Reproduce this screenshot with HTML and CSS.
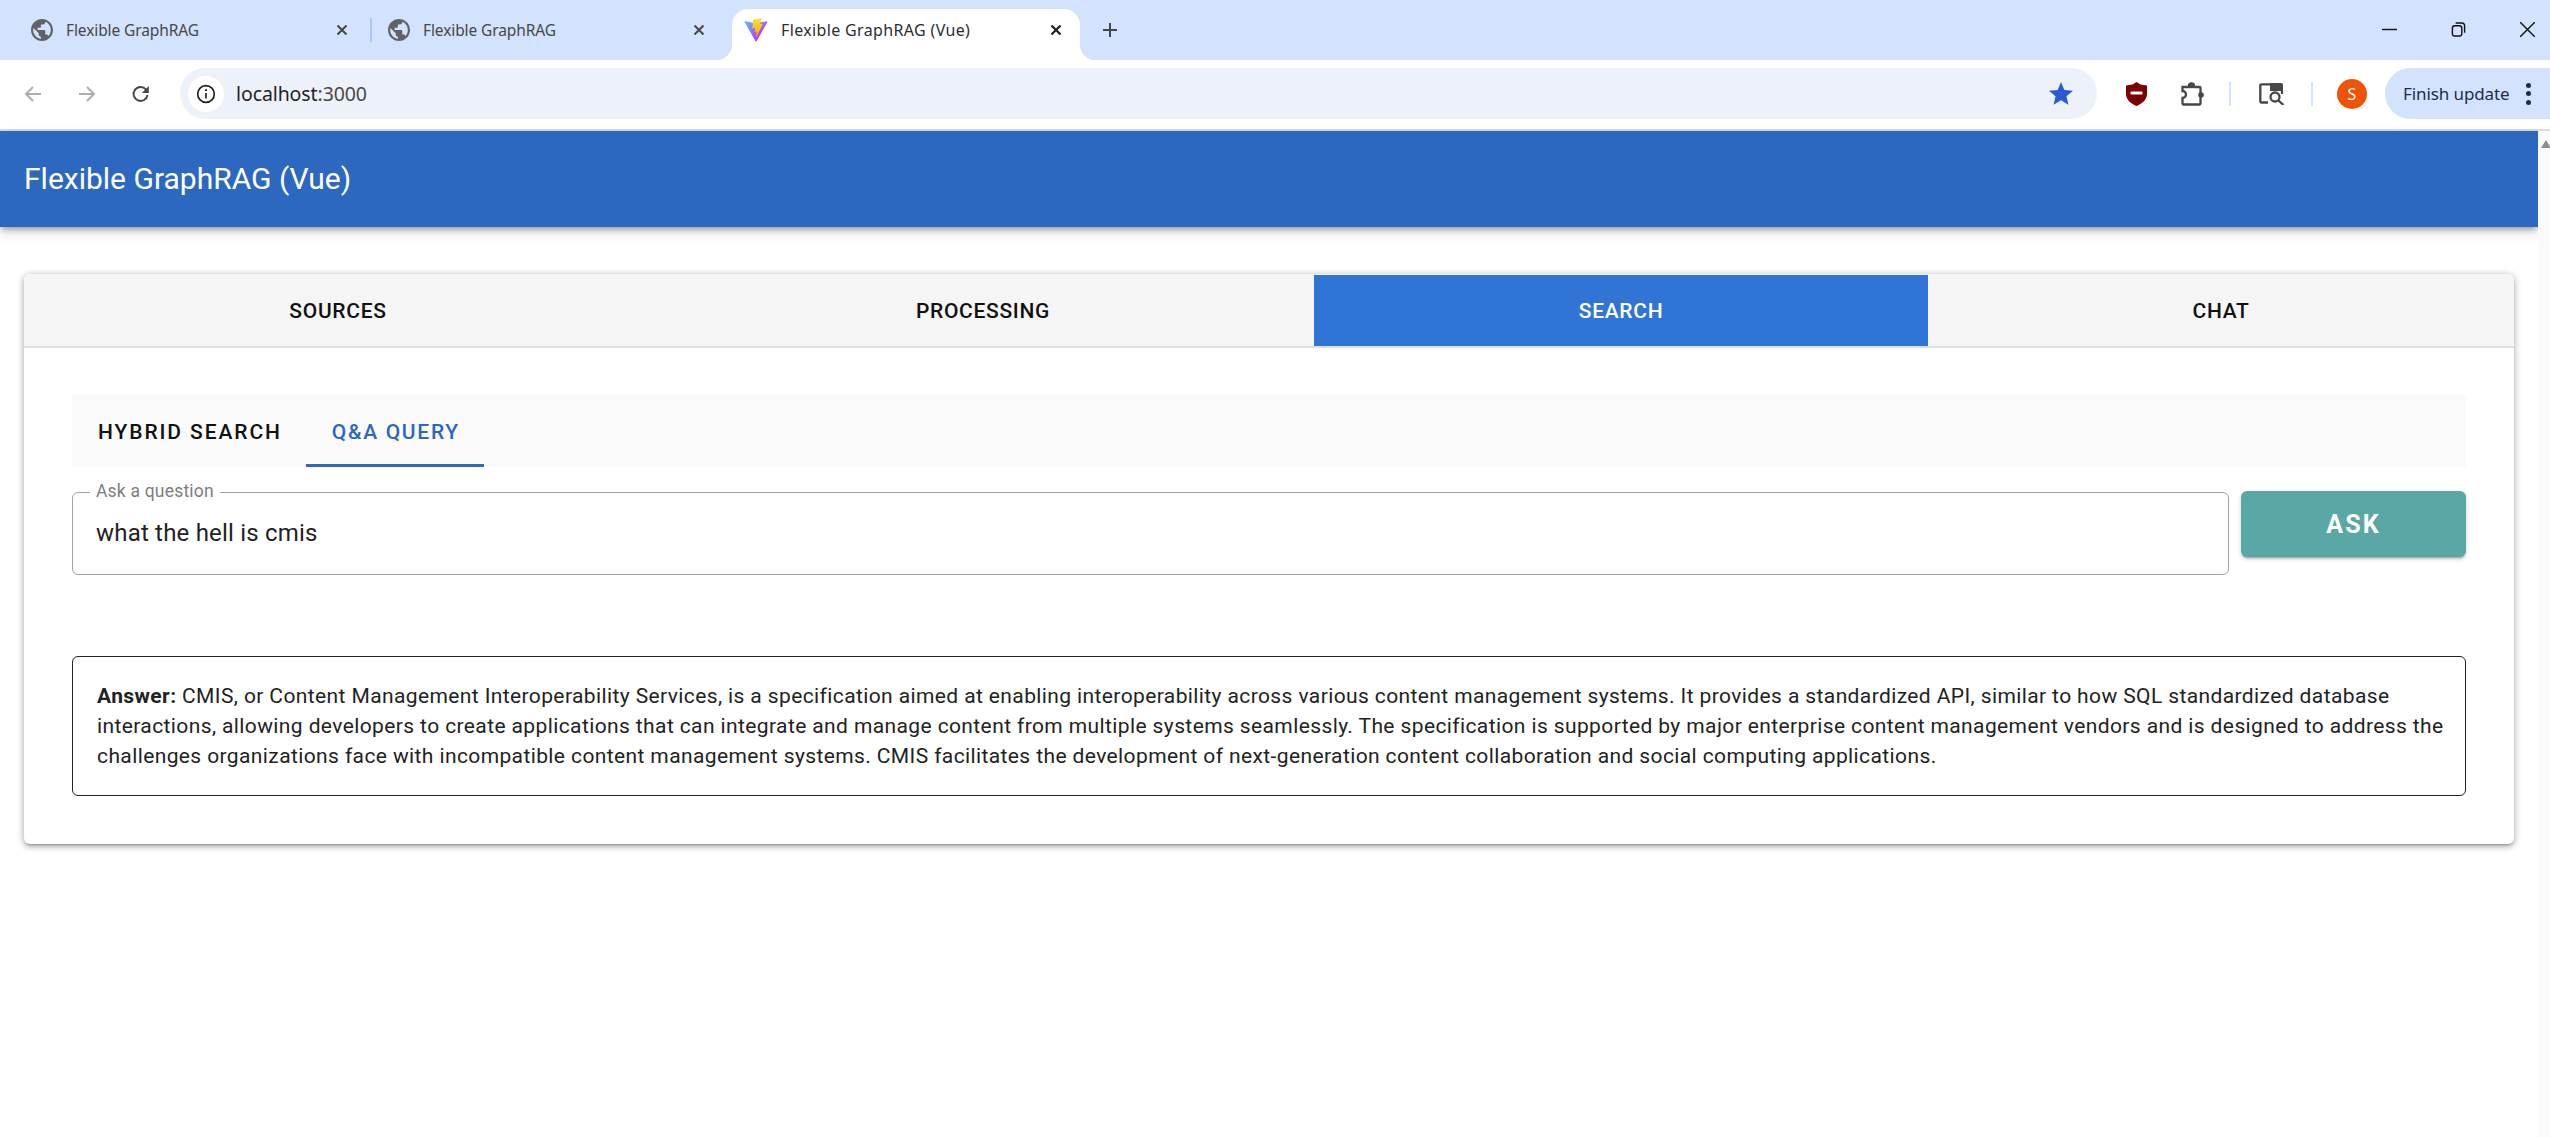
FILE: index.html
```html
<!DOCTYPE html>
<html lang="en">
<head>
<meta charset="UTF-8">
<meta name="viewport" content="width=device-width, initial-scale=1.0">
<title>Flexible GraphRAG (Vue)</title>
<link rel="stylesheet" href="styles.css">
</head>
<body>

<div class="tab-strip">
  <div class="browser-tab">
    <svg class="tab-icon" viewBox="2 2 20 20"><path fill="#5f6368" d="M12 2C6.48 2 2 6.48 2 12s4.48 10 10 10 10-4.48 10-10S17.52 2 12 2zm-1 17.93c-3.95-.49-7-3.85-7-7.93 0-.62.08-1.21.21-1.79L9 15v1c0 1.1.9 2 2 2v1.93zm6.9-2.54c-.26-.81-1-1.39-1.9-1.39h-1v-3c0-.55-.45-1-1-1H8v-2h2c.55 0 1-.45 1-1V7h2c1.1 0 2-.9 2-2v-.41c2.93 1.19 5 4.06 5 7.41 0 2.08-.8 3.97-2.1 5.39z"/></svg>
    <span class="tab-title">Flexible GraphRAG</span>
    <svg class="tab-close" viewBox="0 0 12 12"><path d="M1.5 1.5l9 9M10.5 1.5l-9 9"/></svg>
  </div>
  <div class="tab-sep"></div>
  <div class="browser-tab">
    <svg class="tab-icon" viewBox="2 2 20 20"><path fill="#5f6368" d="M12 2C6.48 2 2 6.48 2 12s4.48 10 10 10 10-4.48 10-10S17.52 2 12 2zm-1 17.93c-3.95-.49-7-3.85-7-7.93 0-.62.08-1.21.21-1.79L9 15v1c0 1.1.9 2 2 2v1.93zm6.9-2.54c-.26-.81-1-1.39-1.9-1.39h-1v-3c0-.55-.45-1-1-1H8v-2h2c.55 0 1-.45 1-1V7h2c1.1 0 2-.9 2-2v-.41c2.93 1.19 5 4.06 5 7.41 0 2.08-.8 3.97-2.1 5.39z"/></svg>
    <span class="tab-title">Flexible GraphRAG</span>
    <svg class="tab-close" viewBox="0 0 12 12"><path d="M1.5 1.5l9 9M10.5 1.5l-9 9"/></svg>
  </div>
  <div class="browser-tab active">
    <svg class="vite-icon" viewBox="2 1 28 29.5">
      <defs>
        <linearGradient id="viteA" x1="6" y1="33" x2="235" y2="344" gradientUnits="userSpaceOnUse" gradientTransform="scale(.0781)"><stop offset="0" stop-color="#41d1ff"/><stop offset="1" stop-color="#bd34fe"/></linearGradient>
        <linearGradient id="viteB" x1="194" y1="8" x2="236" y2="293" gradientUnits="userSpaceOnUse" gradientTransform="scale(.0781)"><stop offset="0" stop-color="#ffea83"/><stop offset=".08" stop-color="#ffdd35"/><stop offset="1" stop-color="#ffa800"/></linearGradient>
      </defs>
      <path fill="url(#viteA)" d="M29.8836 6.146L16.7418 29.6457c-.2714.4851-.9684.488-1.2439.0052L2.0956 6.1482c-.3001-.5262.1499-1.1634.7462-1.057l13.1563 2.3516a.7144.7144 0 00.2537-.0004l12.8811-2.3478c.5944-.1083 1.0463.5241.7507 1.0513z"/>
      <path fill="url(#viteB)" d="M22.2644 1.2399l-9.7255 1.9056a.3572.3572 0 00-.2879.3294l-.5982 10.1045c-.0141.238.2045.4227.4367.3691l2.7077-.6248c.2534-.0585.4823.1647.4302.4194l-.8044 3.9393c-.0542.265.1947.4918.4536.4132l1.6725-.5082c.2593-.0787.5084.1487.4536.414l-1.2785 6.1881c-.08.3871.4349.5982.6498.2665l.1435-.2216 7.9251-15.8156c.1327-.2648-.0961-.5666-.3869-.5105l-2.7872.538c-.2619.0505-.4847-.1934-.4109-.4494l1.8191-6.3064c.074-.2565-.1496-.5009-.4119-.4495z"/>
    </svg>
    <span class="tab-title">Flexible GraphRAG (Vue)</span>
    <svg class="tab-close" viewBox="0 0 12 12"><path d="M1.5 1.5l9 9M10.5 1.5l-9 9"/></svg>
  </div>
  <svg class="new-tab" viewBox="0 0 16 16"><path d="M8 1v14M1 8h14"/></svg>
  <div class="window-controls">
    <svg class="win-icon" viewBox="0 0 16 16"><path d="M0 8h16"/></svg>
    <svg class="win-icon" viewBox="0 0 16 16"><rect x="1.500" y="4" width="10" height="11" rx="2.500"/><path d="M5 1h6.500a3 3 0 013 3v7.500"/></svg>
    <svg class="win-icon" viewBox="0 0 16 16"><path d="M0 0l16 16M16 0L0 16"/></svg>
  </div>
</div>

<div class="toolbar">
  <div class="nav-buttons">
    <svg class="nav-icon off" viewBox="0 0 20 20"><path d="M18 10H3M10 3l-7 7 7 7"/></svg>
    <svg class="nav-icon off" viewBox="0 0 20 20"><path d="M2 10h15M10 3l7 7-7 7"/></svg>
    <svg class="nav-icon" viewBox="0 0 20 20"><path d="M16.500 11a7 7 0 11-1.600-5.600L17 7.500"/><path class="fill" d="M17.800 2v7h-7z"/></svg>
  </div>
  <div class="omnibox">
    <div class="site-info">
      <svg viewBox="0 0 20 20"><circle cx="10" cy="10" r="8.300"/><path d="M10 9v5.500"/><path class="dot" d="M10 5.200v1.900"/></svg>
    </div>
    <span class="url">localhost<span class="url-port">:3000</span></span>
    <svg class="star" viewBox="2 2 20 20"><path d="M12 17.270L18.180 21l-1.640-7.030L22 9.240l-7.190-.610L12 2 9.190 8.630 2 9.240l5.460 4.730L5.820 21z"/></svg>
  </div>
  <div class="actions">
    <svg class="shield" viewBox="0 0 21 24"><path fill="#7c0202" d="M10.500 0l4 2.500 6.500 1V12c0 5.500-4.500 9.500-10.500 12C4.500 21.500 0 17.500 0 12V3.500l6.500-1z"/><rect x="4.500" y="9.500" width="12" height="3" rx="1" fill="#fff"/></svg>
    <svg class="puzzle" viewBox="0 0 24 24">
      <path d="M2.500 5h6.500V4a2.500 2.500 0 015 0v1h5.500a1 1 0 011 1v15.500a1 1 0 01-1 1H3.500a1 1 0 01-1-1V16a3.500 3.500 0 000-7z"/>
      <circle class="knob" cx="21" cy="13" r="2.800"/>
      <circle class="knob" cx="11.500" cy="3.500" r="2.800"/>
    </svg>
    <div class="action-sep"></div>
    <svg class="tab-search" viewBox="0 0 26 22">
      <path class="outline" d="M9 19.500H2.500a1.200 1.200 0 01-1.200-1.200V2.500a1.200 1.200 0 011.200-1.200h9"/>
      <path class="solid" d="M11 0h11a2 2 0 012 2v6H11z"/>
      <circle class="outline" cx="16" cy="14" r="4.500"/>
      <path class="outline" d="M19.500 17.500l5 4.500"/>
      <path class="outline" d="M23 8v3"/>
    </svg>
    <div class="action-sep"></div>
    <div class="avatar">S</div>
  </div>
  <div class="update-pill">
    <span>Finish update</span>
    <div class="menu-dots"><i></i><i></i><i></i></div>
  </div>
</div>

<div class="page">
  <div class="app">
    <header class="app-bar">Flexible GraphRAG (Vue)</header>
    <main class="content">
      <section class="card">
        <nav class="main-tabs">
          <div class="main-tab">SOURCES</div>
          <div class="main-tab">PROCESSING</div>
          <div class="main-tab selected">SEARCH</div>
          <div class="main-tab">CHAT</div>
        </nav>
        <div class="card-body">
          <div class="sub-tabs">
            <div class="sub-tab">HYBRID SEARCH</div>
            <div class="sub-tab selected">Q&amp;A QUERY</div>
          </div>
          <div class="ask-row">
            <fieldset class="ask-field">
              <legend>Ask a question</legend>
              <div class="ask-value">what the hell is cmis</div>
            </fieldset>
            <button class="ask-button">ASK</button>
          </div>
          <div class="answer">
            <strong>Answer:</strong> CMIS, or Content Management Interoperability Services, is a specification aimed at enabling interoperability across various content management systems. It provides a standardized API, similar to how SQL standardized database interactions, allowing developers to create applications that can integrate and manage content from multiple systems seamlessly. The specification is supported by major enterprise content management vendors and is designed to address the challenges organizations face with incompatible content management systems. CMIS facilitates the development of next-generation content collaboration and social computing applications.
          </div>
        </div>
      </section>
    </main>
  </div>
  <div class="scrollbar"><div class="scroll-up"></div></div>
</div>

</body>
</html>
```

FILE: styles.css
```css
* {
  box-sizing: border-box;
}

html, body {
  margin: 0;
  height: 100%;
  overflow: hidden;
}

body {
  font-family: Roboto, "Liberation Sans", sans-serif;
  background-color: white;
  display: flex;
  flex-direction: column;
}

/* Browser chrome */
.tab-strip {
  height: 60px;
  flex: none;
  background-color: #d3e3fd;
  display: flex;
  align-items: flex-end;
  padding-left: 18px;
}

.browser-tab {
  position: relative;
  width: 348px;
  height: 51px;
  flex: none;
  display: flex;
  align-items: center;
  padding: 0 18px 9px 13px;
  border-radius: 16px 16px 0 0;
}

.browser-tab.active {
  background-color: white;
  margin-left: 9px;
}

.browser-tab.active::before,
.browser-tab.active::after {
  content: "";
  position: absolute;
  bottom: 0;
  width: 16px;
  height: 16px;
}

.browser-tab.active::before {
  left: -16px;
  background: radial-gradient(circle at 0 0, transparent 16px, white 16.5px);
}

.browser-tab.active::after {
  right: -16px;
  background: radial-gradient(circle at 100% 0, transparent 16px, white 16.5px);
}

.tab-icon {
  width: 22px;
  height: 22px;
  flex: none;
}

.vite-icon {
  width: 24px;
  height: 24px;
  margin-left: -1px;
  flex: none;
}

.tab-title {
  font-family: "Noto Sans", sans-serif;
  font-size: 15.5px;
  color: #45474a;
  margin-left: 13px;
  letter-spacing: -0.1px;
  flex: 1;
  white-space: nowrap;
}

.active .tab-title {
  color: #2b2d30;
  font-size: 16px;
  letter-spacing: 0.35px;
}

.tab-close {
  width: 12px;
  height: 12px;
  flex: none;
  fill: none;
  stroke: #45474a;
  stroke-width: 2;
}

.active .tab-close {
  stroke: #1f1f1f;
  stroke-width: 2.2;
}

.tab-sep {
  width: 2px;
  height: 24px;
  margin: 0 3.5px 18px;
  background-color: #a8c7fa;
  flex: none;
}

.new-tab {
  width: 16px;
  height: 16px;
  margin: 0 0 22px 22px;
  fill: none;
  stroke: #444746;
  stroke-width: 2;
  flex: none;
}

.window-controls {
  margin-left: auto;
  display: flex;
  gap: 54px;
  padding: 0 15.5px 23.5px 0;
}

.win-icon {
  width: 15px;
  height: 15px;
  fill: none;
  stroke: #111;
  stroke-width: 1.5;
}

.toolbar {
  height: 71px;
  flex: none;
  background-color: white;
  border-bottom: 2px solid #dcdcdc;
  display: flex;
  align-items: center;
  padding-bottom: 2px;
}

.nav-buttons {
  width: 180px;
  flex: none;
  display: flex;
  align-items: center;
  gap: 34px;
  padding-left: 23px;
}

.nav-icon {
  width: 20px;
  height: 20px;
  fill: none;
  stroke: #474747;
  stroke-width: 1.9;
}

.nav-icon.off {
  stroke: #aeaeae;
}

.nav-icon .fill {
  fill: #474747;
  stroke: none;
}

.omnibox {
  width: 1917px;
  height: 51px;
  flex: none;
  background-color: #edf2fa;
  border-radius: 26px;
  display: flex;
  align-items: center;
  padding: 0 24px 0 8px;
}

.site-info {
  width: 36px;
  height: 36px;
  border-radius: 50%;
  background-color: white;
  display: flex;
  align-items: center;
  justify-content: center;
  flex: none;
}

.site-info svg {
  width: 20px;
  height: 20px;
  fill: none;
  stroke: #1f1f1f;
  stroke-width: 1.7;
}

.site-info .dot {
  stroke-width: 2;
}

.url {
  font-family: "Noto Sans", sans-serif;
  font-size: 19.5px;
  color: #1f1f1f;
  margin-left: 12px;
  letter-spacing: -0.1px;
}

.url-port {
  color: #474747;
}

.star {
  width: 24px;
  height: 24px;
  margin-left: auto;
  fill: #285bd4;
}

.actions {
  width: 288px;
  flex: none;
  display: flex;
  align-items: center;
  padding-left: 29px;
}

.shield {
  width: 21px;
  height: 24px;
}

.puzzle {
  width: 24px;
  height: 24px;
  margin-left: 33px;
  fill: none;
  stroke: #474747;
  stroke-width: 2.3;
}

.puzzle .knob {
  fill: #474747;
  stroke: none;
}

.action-sep {
  width: 2px;
  height: 24px;
  background-color: #d3e3fd;
}

.puzzle + .action-sep {
  margin: 0 28px 0 25px;
}

.tab-search {
  width: 26px;
  height: 22px;
}

.tab-search .outline {
  fill: none;
  stroke: #474747;
  stroke-width: 2.3;
}

.tab-search .solid {
  fill: #474747;
}

.tab-search + .action-sep {
  margin: 0 24px 0 26px;
}

.avatar {
  width: 30px;
  height: 30px;
  border-radius: 50%;
  background-color: #ef5305;
  color: white;
  font-family: "Noto Sans", sans-serif;
  font-size: 16px;
  display: flex;
  align-items: center;
  justify-content: center;
}

.update-pill {
  flex: 1;
  height: 51px;
  background-color: #d3e3fd;
  border-radius: 26px 0 0 26px;
  display: flex;
  align-items: center;
  padding-left: 18px;
  color: #1d2b4f;
  font-family: "Noto Sans", sans-serif;
  font-size: 17px;
  letter-spacing: -0.1px;
}

.menu-dots {
  display: flex;
  flex-direction: column;
  gap: 3.5px;
  margin-left: 16px;
}

.menu-dots i {
  width: 5px;
  height: 5px;
  border-radius: 50%;
  background-color: #1d2b4f;
}

/* App */
.page {
  flex: 1;
  display: flex;
  min-height: 0;
}

.app {
  flex: 1;
  min-width: 0;
  background-color: white;
}

.scrollbar {
  width: 12px;
  flex: none;
  background-color: #fafafa;
  padding: 9px 0 0 3px;
}

.scroll-up {
  width: 0;
  height: 0;
  border-left: 5px solid transparent;
  border-right: 5px solid transparent;
  border-bottom: 8px solid #8f8f8f;
}

.app-bar {
  height: 96px;
  background-color: #2d68c0;
  color: white;
  font-size: 30px;
  font-weight: 400;
  line-height: 96px;
  padding-left: 24px;
  box-shadow: 0 3px 6px -1px rgba(0, 0, 0, 0.35), 0 6px 12px rgba(0, 0, 0, 0.12);
}

.content {
  padding: 47px 24px 0;
}

.card {
  background-color: white;
  border-radius: 6px;
  box-shadow: 0 3px 3px -2px rgba(0, 0, 0, 0.3), 0 2px 6px 1px rgba(0, 0, 0, 0.2), 0 1px 8px rgba(0, 0, 0, 0.12);
  height: 570px;
  overflow: hidden;
}

.main-tabs {
  height: 74px;
  background-color: #f5f5f5;
  border-bottom: 2px solid #e0e0e0;
  display: grid;
  grid-template-columns: 628px 662px 614px 1fr;
}

.main-tab {
  display: flex;
  align-items: center;
  justify-content: center;
  padding-top: 2px;
  font-size: 21px;
  font-weight: 500;
  letter-spacing: 0.7px;
  color: #111;
}

.main-tab.selected {
  background-color: #3074d6;
  color: white;
  margin-top: 1px;
  padding-top: 1px;
}

.card-body {
  padding: 47px 48px 0;
}

.sub-tabs {
  height: 72px;
  background-color: #fafafa;
  display: flex;
}

.sub-tab {
  padding: 2px 24px 0 26px;
  display: flex;
  align-items: center;
  font-size: 21px;
  font-weight: 500;
  letter-spacing: 1.9px;
  color: #111;
}

.sub-tab.selected {
  color: #2d68c0;
  border-bottom: 3px solid #2d68c0;
  padding-top: 5px;
  letter-spacing: 1.7px;
}

.ask-row {
  display: flex;
  gap: 12px;
  align-items: flex-start;
  margin-top: 24px;
}

.ask-field {
  flex: 1;
  height: 84px;
  margin: 0;
  padding: 0 23px;
  border: 1px solid #a3a3a3;
  border-radius: 6px;
  position: relative;
}

.ask-field legend {
  font-size: 17.5px;
  color: #7d7d7d;
  padding: 0 6px;
  margin-left: -6px;
  letter-spacing: 0.2px;
  line-height: 0;
  height: 2px;
}

.ask-value {
  font-size: 24px;
  line-height: 32px;
  margin-top: 24px;
  color: #222;
  letter-spacing: 0.2px;
}

.ask-button {
  width: 225px;
  height: 66px;
  flex: none;
  border: none;
  border-radius: 6px;
  background-color: #59a8a5;
  color: white;
  font-family: inherit;
  font-size: 25px;
  font-weight: 700;
  letter-spacing: 2.1px;
  box-shadow: 0 3px 2px -2px rgba(0, 0, 0, 0.25), 0 2px 4px rgba(0, 0, 0, 0.2);
}

.answer {
  margin-top: 81px;
  height: 140px;
  border: 1px solid #222;
  border-radius: 6px;
  padding: 24px 12px 24px 24px;
  font-size: 21px;
  line-height: 30px;
  letter-spacing: 0.39px;
  color: #222;
}

.answer strong {
  font-weight: 700;
}
```
